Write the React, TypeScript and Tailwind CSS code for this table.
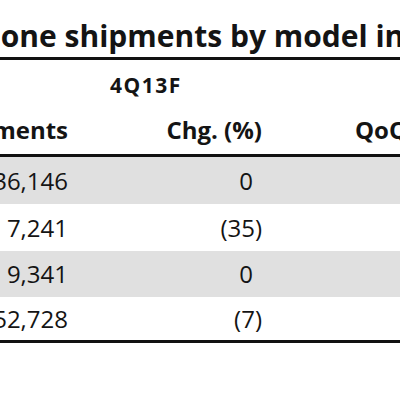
const rows = [
  { units: '36,146', chg: '0', shade: true, h: 'h-[47px]' },
  { units: '7,241', chg: '(35)', shade: false, h: 'h-[47px]' },
  { units: '9,341', chg: '0', shade: true, h: 'h-[46px]' },
  { units: '52,728', chg: '(7)', shade: false, h: 'h-[43px]' },
];

export default function App() {
  return (
    <div
      className="w-[400px] h-[400px] overflow-hidden bg-white text-[#141414]"
      style={{ fontFamily: '"Open Sans", "Noto Sans", sans-serif' }}
    >
      {/* Title */}
      <div className="h-[57px] pt-[16px]">
        <div className="ml-[-47px] whitespace-nowrap text-[30px] font-bold leading-[40px]">
          iPhone shipments by model in 4Q13
        </div>
      </div>
      <div className="h-[3px] bg-[#111]" />

      {/* Period */}
      <div className="h-[36px] pt-[13px] pl-[110px] text-[21px] font-bold leading-[24px] tracking-[1.5px]">
        4Q13F
      </div>

      {/* Column headers */}
      <div className="h-[58px] flex items-end pb-[9px] text-[24px] font-bold leading-[30px]">
        <div className="w-[68px] min-w-0 shrink-0 flex justify-end whitespace-nowrap">Shipments</div>
        <div className="w-[194px] min-w-0 shrink-0 flex justify-end whitespace-nowrap">Chg. (%)</div>
        <div className="pl-[93px] whitespace-nowrap">QoQ Chg. (%)</div>
      </div>
      <div className="h-[3px] bg-[#111]" />

      {rows.map((r) => (
        <div
          key={r.units}
          className={`${r.h} flex items-center text-[24px] leading-[28px] ${r.shade ? 'bg-[#e0e0e0]' : 'bg-white'}`}
        >
          <div className="w-[68px] min-w-0 shrink-0 flex justify-end whitespace-nowrap">{r.units}</div>
          <div className="w-[194px] min-w-0 shrink-0 flex justify-end whitespace-nowrap">
            <span className={r.chg.startsWith('(') ? '' : 'pr-[9px]'}>{r.chg}</span>
          </div>
        </div>
      ))}
      <div className="h-[3px] bg-[#111]" />
    </div>
  );
}
